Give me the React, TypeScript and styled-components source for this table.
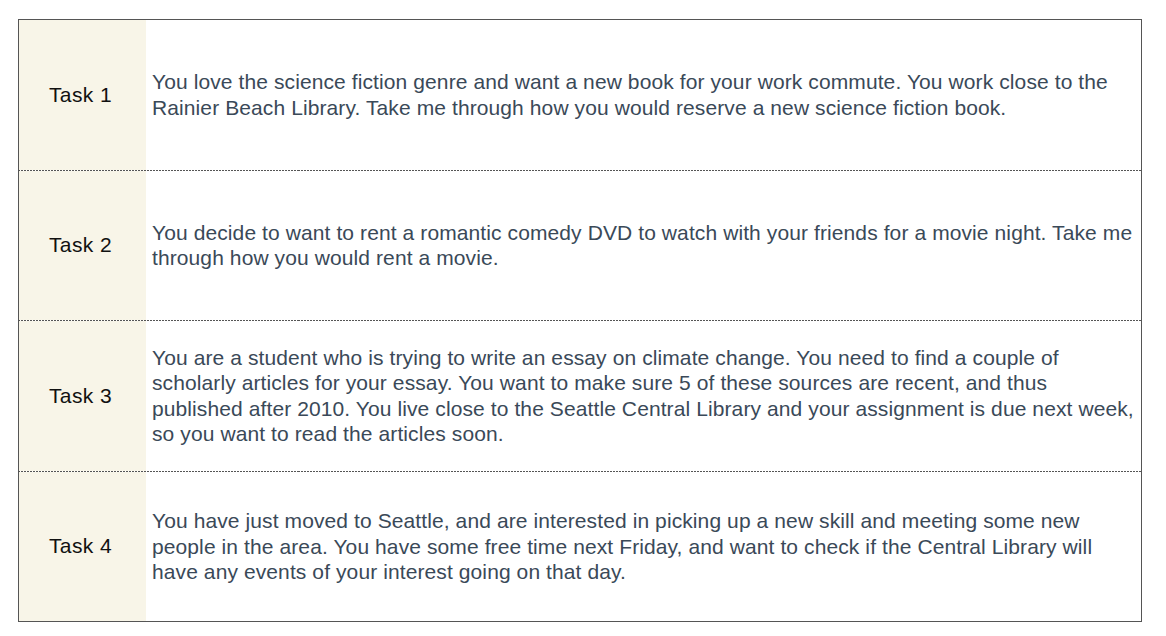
import React from 'react'
import styled, { createGlobalStyle } from 'styled-components'

const tasks = [
  {
    label: 'Task 1',
    text: 'You love the science fiction genre and want a new book for your work commute. You work close to the Rainier Beach Library. Take me through how you would reserve a new science fiction book.',
  },
  {
    label: 'Task 2',
    text: 'You decide to want to rent a romantic comedy DVD to watch with your friends for a movie night. Take me through how you would rent a movie.',
  },
  {
    label: 'Task 3',
    text: 'You are a student who is trying to write an essay on climate change. You need to find a couple of scholarly articles for your essay. You want to make sure 5 of these sources are recent, and thus published after 2010. You live close to the Seattle Central Library and your assignment is due next week, so you want to read the articles soon.',
  },
  {
    label: 'Task 4',
    text: 'You have just moved to Seattle, and are interested in picking up a new skill and meeting some new people in the area. You have some free time next Friday, and want to check if the Central Library will have any events of your interest going on that day.',
  },
]

const GlobalStyle = createGlobalStyle`
  html, body {
    margin: 0;
    background: #ffffff;
  }
  body {
    font-family: "Liberation Sans", Arial, sans-serif;
  }
`

const Page = styled.div`
  padding: 19px 0 0 18px;
`

const Table = styled.div`
  box-sizing: border-box;
  width: 1124px;
  height: 603px;
  border: 1px solid #555555;
  display: flex;
  flex-direction: column;
`

const Row = styled.div<{ $first: boolean }>`
  flex: 1;
  display: grid;
  grid-template-columns: 127px 1fr;
  border-top: ${(p) => (p.$first ? 'none' : '1px solid transparent')};
  border-image: ${(p) =>
    p.$first
      ? 'none'
      : 'repeating-linear-gradient(to right, #555555 0 2px, transparent 2px 3px) 1'};
`

const Label = styled.div`
  background: #f8f5e8;
  display: flex;
  align-items: center;
  justify-content: center;
  padding-right: 4px;
  font-size: 21px;
  letter-spacing: 0.4px;
  color: #111111;
`

const Description = styled.div`
  display: flex;
  align-items: center;
  padding: 0 6px;
  font-size: 21px;
  letter-spacing: 0.1px;
  line-height: 25.5px;
  color: #3a4958;
`

export default function App() {
  return (
    <Page>
      <GlobalStyle />
      <Table>
        {tasks.map((task, i) => (
          <Row key={task.label} $first={i === 0}>
            <Label>{task.label}</Label>
            <Description>{task.text}</Description>
          </Row>
        ))}
      </Table>
    </Page>
  )
}
